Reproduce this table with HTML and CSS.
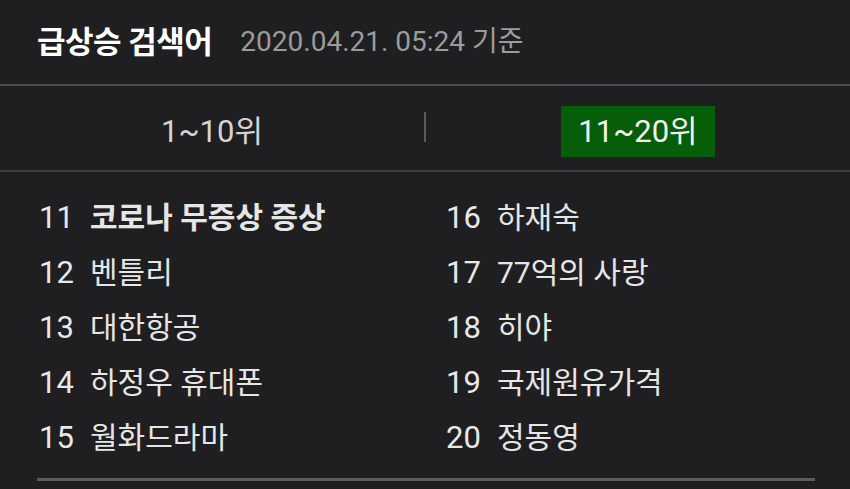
FILE: index.html
```html
<!DOCTYPE html>
<html lang="ko">
<head>
<meta charset="utf-8">
<link rel="stylesheet" href="styles.css">
</head>
<body>
<div class="page">
  <header class="head">
    <h1 class="title">급상승 검색어</h1>
    <span class="date">2020.04.21. 05:24 기준</span>
  </header>
  <nav class="tabs">
    <div class="tab"><span class="tab-label">1~10위</span></div>
    <div class="sep"></div>
    <div class="tab"><span class="tab-label active">11~20위</span></div>
  </nav>
  <div class="list-wrap">
    <ol class="list">
      <li class="row"><span class="num">11</span><span class="kw strong">코로나 무증상 증상</span></li>
      <li class="row"><span class="num">16</span><span class="kw">하재숙</span></li>
      <li class="row"><span class="num">12</span><span class="kw">벤틀리</span></li>
      <li class="row"><span class="num">17</span><span class="kw">77억의 사랑</span></li>
      <li class="row"><span class="num">13</span><span class="kw">대한항공</span></li>
      <li class="row"><span class="num">18</span><span class="kw">히야</span></li>
      <li class="row"><span class="num">14</span><span class="kw">하정우 휴대폰</span></li>
      <li class="row"><span class="num">19</span><span class="kw">국제원유가격</span></li>
      <li class="row"><span class="num">15</span><span class="kw">월화드라마</span></li>
      <li class="row"><span class="num">20</span><span class="kw">정동영</span></li>
    </ol>
    <div class="bottom-line"></div>
  </div>
</div>
</body>
</html>
```
FILE: styles.css
```css
* { box-sizing: border-box; margin: 0; padding: 0; }
html, body {
  width: 850px;
  height: 489px;
  background: #1f1f21;
  overflow: hidden;
}
body {
  font-family: Roboto, "Noto Sans CJK KR", sans-serif;
  color: #e4e4e4;
}
.page { width: 850px; }
.head {
  height: 86px;
  display: flex;
  align-items: center;
  padding: 0 0 6px 37px;
  border-bottom: 2px solid #4e4e50;
}
.title {
  font-size: 31px;
  font-weight: 700;
  color: #ffffff;
  letter-spacing: -0.5px;
}
.date {
  margin-left: 28px;
  font-size: 28px;
  color: #9b9b9b;
}
.tabs {
  height: 86px;
  padding-top: 7px;
  display: grid;
  grid-template-columns: 1fr 2px 1fr;
  align-items: center;
  border-bottom: 2px solid #3f3f41;
}
.tab {
  display: flex;
  justify-content: center;
  align-items: center;
}
.sep {
  width: 2px;
  height: 30px;
  margin-bottom: 9px;
  background: #5a5a5c;
}
.tab-label {
  font-size: 31px;
  color: #d4d4d4;
  line-height: 51px;
  height: 51px;
  padding: 0 17px;
}
.tab-label.active {
  background: #065e08;
  color: #f2f2f2;
}
.list-wrap {
  padding: 18px 35px 0 37px;
}
.list {
  list-style: none;
  display: grid;
  grid-template-columns: 407px 1fr;
  grid-auto-rows: 55px;
}
.row {
  font-size: 30px;
  line-height: 55px;
  white-space: nowrap;
}
.num {
  display: inline-block;
  width: 53px;
  padding-left: 2px;
  font-size: 31px;
  color: #e8e8e8;
}
.kw { color: #e6e6e6; }
.kw.strong { font-weight: 700; }
.bottom-line {
  margin-top: 13px;
  height: 3px;
  background: #5c5c5e;
}
```
